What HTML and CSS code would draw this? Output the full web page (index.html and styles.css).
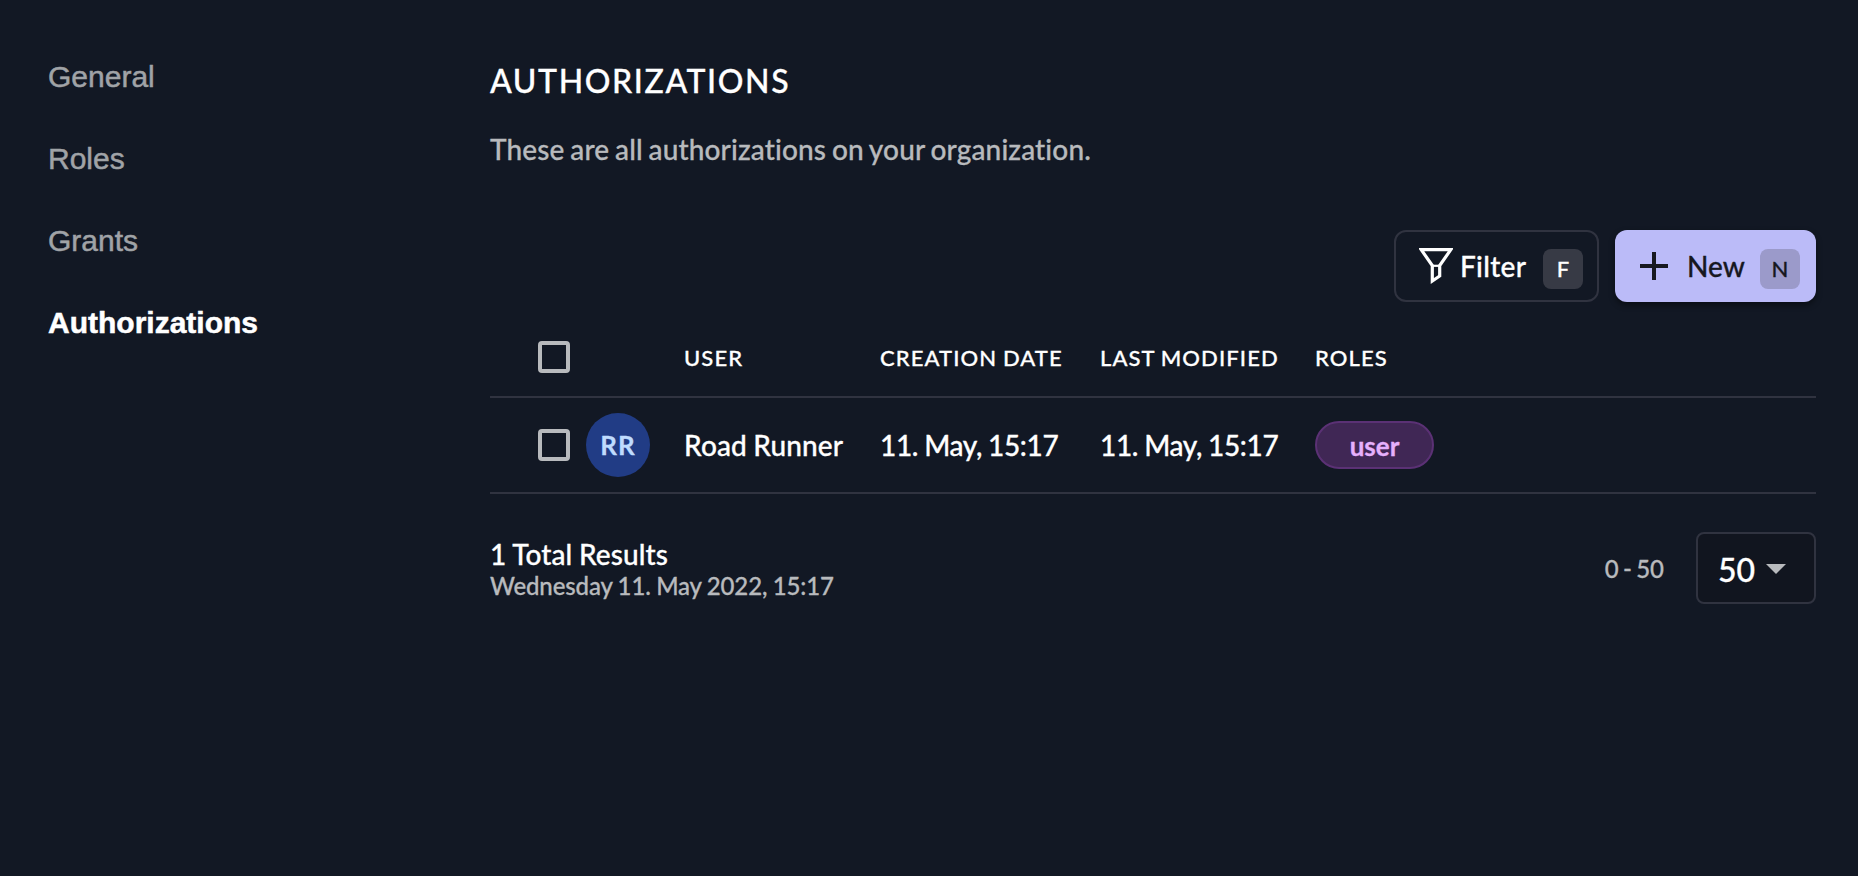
FILE: index.html
```html
<!DOCTYPE html>
<html lang="en">
<head>
<meta charset="utf-8">
<title>Authorizations</title>
<link rel="stylesheet" href="styles.css">
</head>
<body>
<div class="layout">
  <nav class="sidenav">
    <a class="nav-item">General</a>
    <a class="nav-item">Roles</a>
    <a class="nav-item">Grants</a>
    <a class="nav-item active">Authorizations</a>
  </nav>
  <main class="content">
    <h1 class="title">AUTHORIZATIONS</h1>
    <p class="desc">These are all authorizations on your organization.</p>
    <div class="actions">
      <button class="btn btn-outline">
        <svg class="funnel" viewBox="0 0 34 36" fill="none" stroke="currentColor" stroke-width="3.2">
          <path d="M2.2 1.6H31.8L20.7 17.6V28L13.3 33V17.6Z"/><path d="M13.5 17.8H20.9" stroke-width="2.2"/>
        </svg>
        <span class="filter-label">Filter</span>
        <span class="key">F</span>
      </button>
      <button class="btn btn-primary">
        <svg class="plus" viewBox="0 0 28 28" fill="none" stroke="currentColor" stroke-width="4"><path d="M14 0V28M0 14H28"/></svg>
        <span class="new-label">New</span>
        <span class="key key-dark">N</span>
      </button>
    </div>
    <div class="table">
      <div class="row head">
        <span class="checkbox"></span>
        <span></span>
        <span>USER</span>
        <span>CREATION DATE</span>
        <span>LAST MODIFIED</span>
        <span>ROLES</span>
      </div>
      <div class="row data">
        <span class="checkbox"></span>
        <span class="avatar">RR</span>
        <span class="name">Road Runner</span>
        <span class="date">11. May, 15:17</span>
        <span class="date">11. May, 15:17</span>
        <span class="chip">user</span>
      </div>
    </div>
    <footer class="paginator">
      <div class="summary">
        <div class="total">1 Total Results</div>
        <div class="stamp">Wednesday 11. May 2022, 15:17</div>
      </div>
      <div class="range">0 - 50</div>
      <div class="select"><span>50</span><svg class="caret" viewBox="0 0 20 10"><path d="M0 0H20L10 10Z" fill="currentColor"/></svg></div>
    </footer>
  </main>
</div>
</body>
</html>
```
FILE: styles.css
```css
* { box-sizing: border-box; }
body {
  margin: 0;
  height: 876px;
  background: #121824;
  color: #fff;
  font-family: Lato, "Liberation Sans", sans-serif;
  font-size: 28px;
  font-weight: 500;
  font-variant-ligatures: none;
  -webkit-text-stroke: 0.3px;
  overflow: hidden;
}
.layout { display: grid; grid-template-columns: 442px 1326px; padding-left: 48px; }
.sidenav { display: flex; flex-direction: column; padding-top: 36px; }
.nav-item {
  height: 82px;
  font: 400 30px/82px "Liberation Sans", Arial, sans-serif;
  color: #a0a3a7;
  -webkit-text-stroke: 0.5px;
}
.nav-item.active { color: #fff; font-weight: 700; }
.content { display: flex; flex-direction: column; }
.title { margin: 60px 0 0; font-size: 32px; line-height: 42px; font-weight: 500; letter-spacing: 1.6px; }
.desc { margin: 27px 0 1px; line-height: 40px; color: #b8babd; letter-spacing: 0.13px; word-spacing: -1.4px; }
.actions { display: flex; justify-content: flex-end; gap: 16px; margin-top: 60px; }
.btn {
  display: flex;
  align-items: center;
  height: 72px;
  border: 0;
  border-radius: 12px;
  font: inherit;
  font-variant-ligatures: none;
}
.btn-outline { width: 205px; padding: 0 14px 0 23px; border: 2px solid #303340; background: transparent; color: #fff; }
.btn-primary { width: 201px; padding: 0 16px 0 25px; background: #bbbbf8; color: #17181f; box-shadow: 0 3px 6px rgba(0, 0, 0, .45); }
.funnel { width: 34px; height: 36px; margin-bottom: 1px; }
.filter-label { margin-left: 7px; letter-spacing: 0.3px; }
.plus { width: 28px; height: 28px; }
.new-label { margin-left: 19px; }
.key {
  width: 40px;
  height: 40px;
  margin: 6px 0 0 auto;
  border-radius: 8px;
  background: #373a45;
  font-size: 22px;
  line-height: 40px;
  text-align: center;
}
.key-dark { background: #9b9aca; }
.row {
  display: grid;
  grid-template-columns: 48px 98px 196px 220px 215px 1fr;
  align-items: center;
  padding-left: 48px;
  border-bottom: 2px solid #303340;
  white-space: nowrap;
}
.head { height: 80px; margin-top: 16px; font-size: 22px; letter-spacing: 1.1px; word-spacing: -1px; }
.data { height: 96px; }
.name { letter-spacing: 0.15px; word-spacing: -1px; }
.date { letter-spacing: -0.35px; word-spacing: -0.6px; }
.checkbox { width: 32px; height: 32px; border: 4px solid #b8babd; border-radius: 4px; }
.avatar {
  width: 64px;
  height: 64px;
  border-radius: 50%;
  background: #213c85;
  color: #bfdbfe;
  font-size: 26px;
  font-weight: 700;
  line-height: 65px;
  letter-spacing: 1px;
  text-align: center;
}
.chip {
  width: 119px;
  height: 48px;
  border: 2px solid #5b3175;
  border-radius: 24px;
  background: #402755;
  color: #e6b0fc;
  font-size: 26px;
  font-weight: 700;
  line-height: 46px;
  text-align: center;
}
.paginator { display: flex; align-items: center; margin-top: 38px; height: 72px; }
.summary { flex: 1; padding-top: 3px; }
.total { line-height: 32px; letter-spacing: 0.1px; word-spacing: -0.5px; }
.stamp { font-size: 24px; line-height: 32px; color: #b8babd; letter-spacing: -0.13px; word-spacing: -0.5px; }
.range { margin-right: 32px; font-size: 24px; color: #b8babd; word-spacing: -1.8px; }
.select {
  display: flex;
  align-items: center;
  gap: 11px;
  width: 120px;
  height: 72px;
  padding: 2px 0 0 20px;
  border: 2px solid #303340;
  border-radius: 8px;
  background: #11151f;
  font-size: 32px;
}
.caret { width: 20px; height: 10px; color: #b8babd; }
```
